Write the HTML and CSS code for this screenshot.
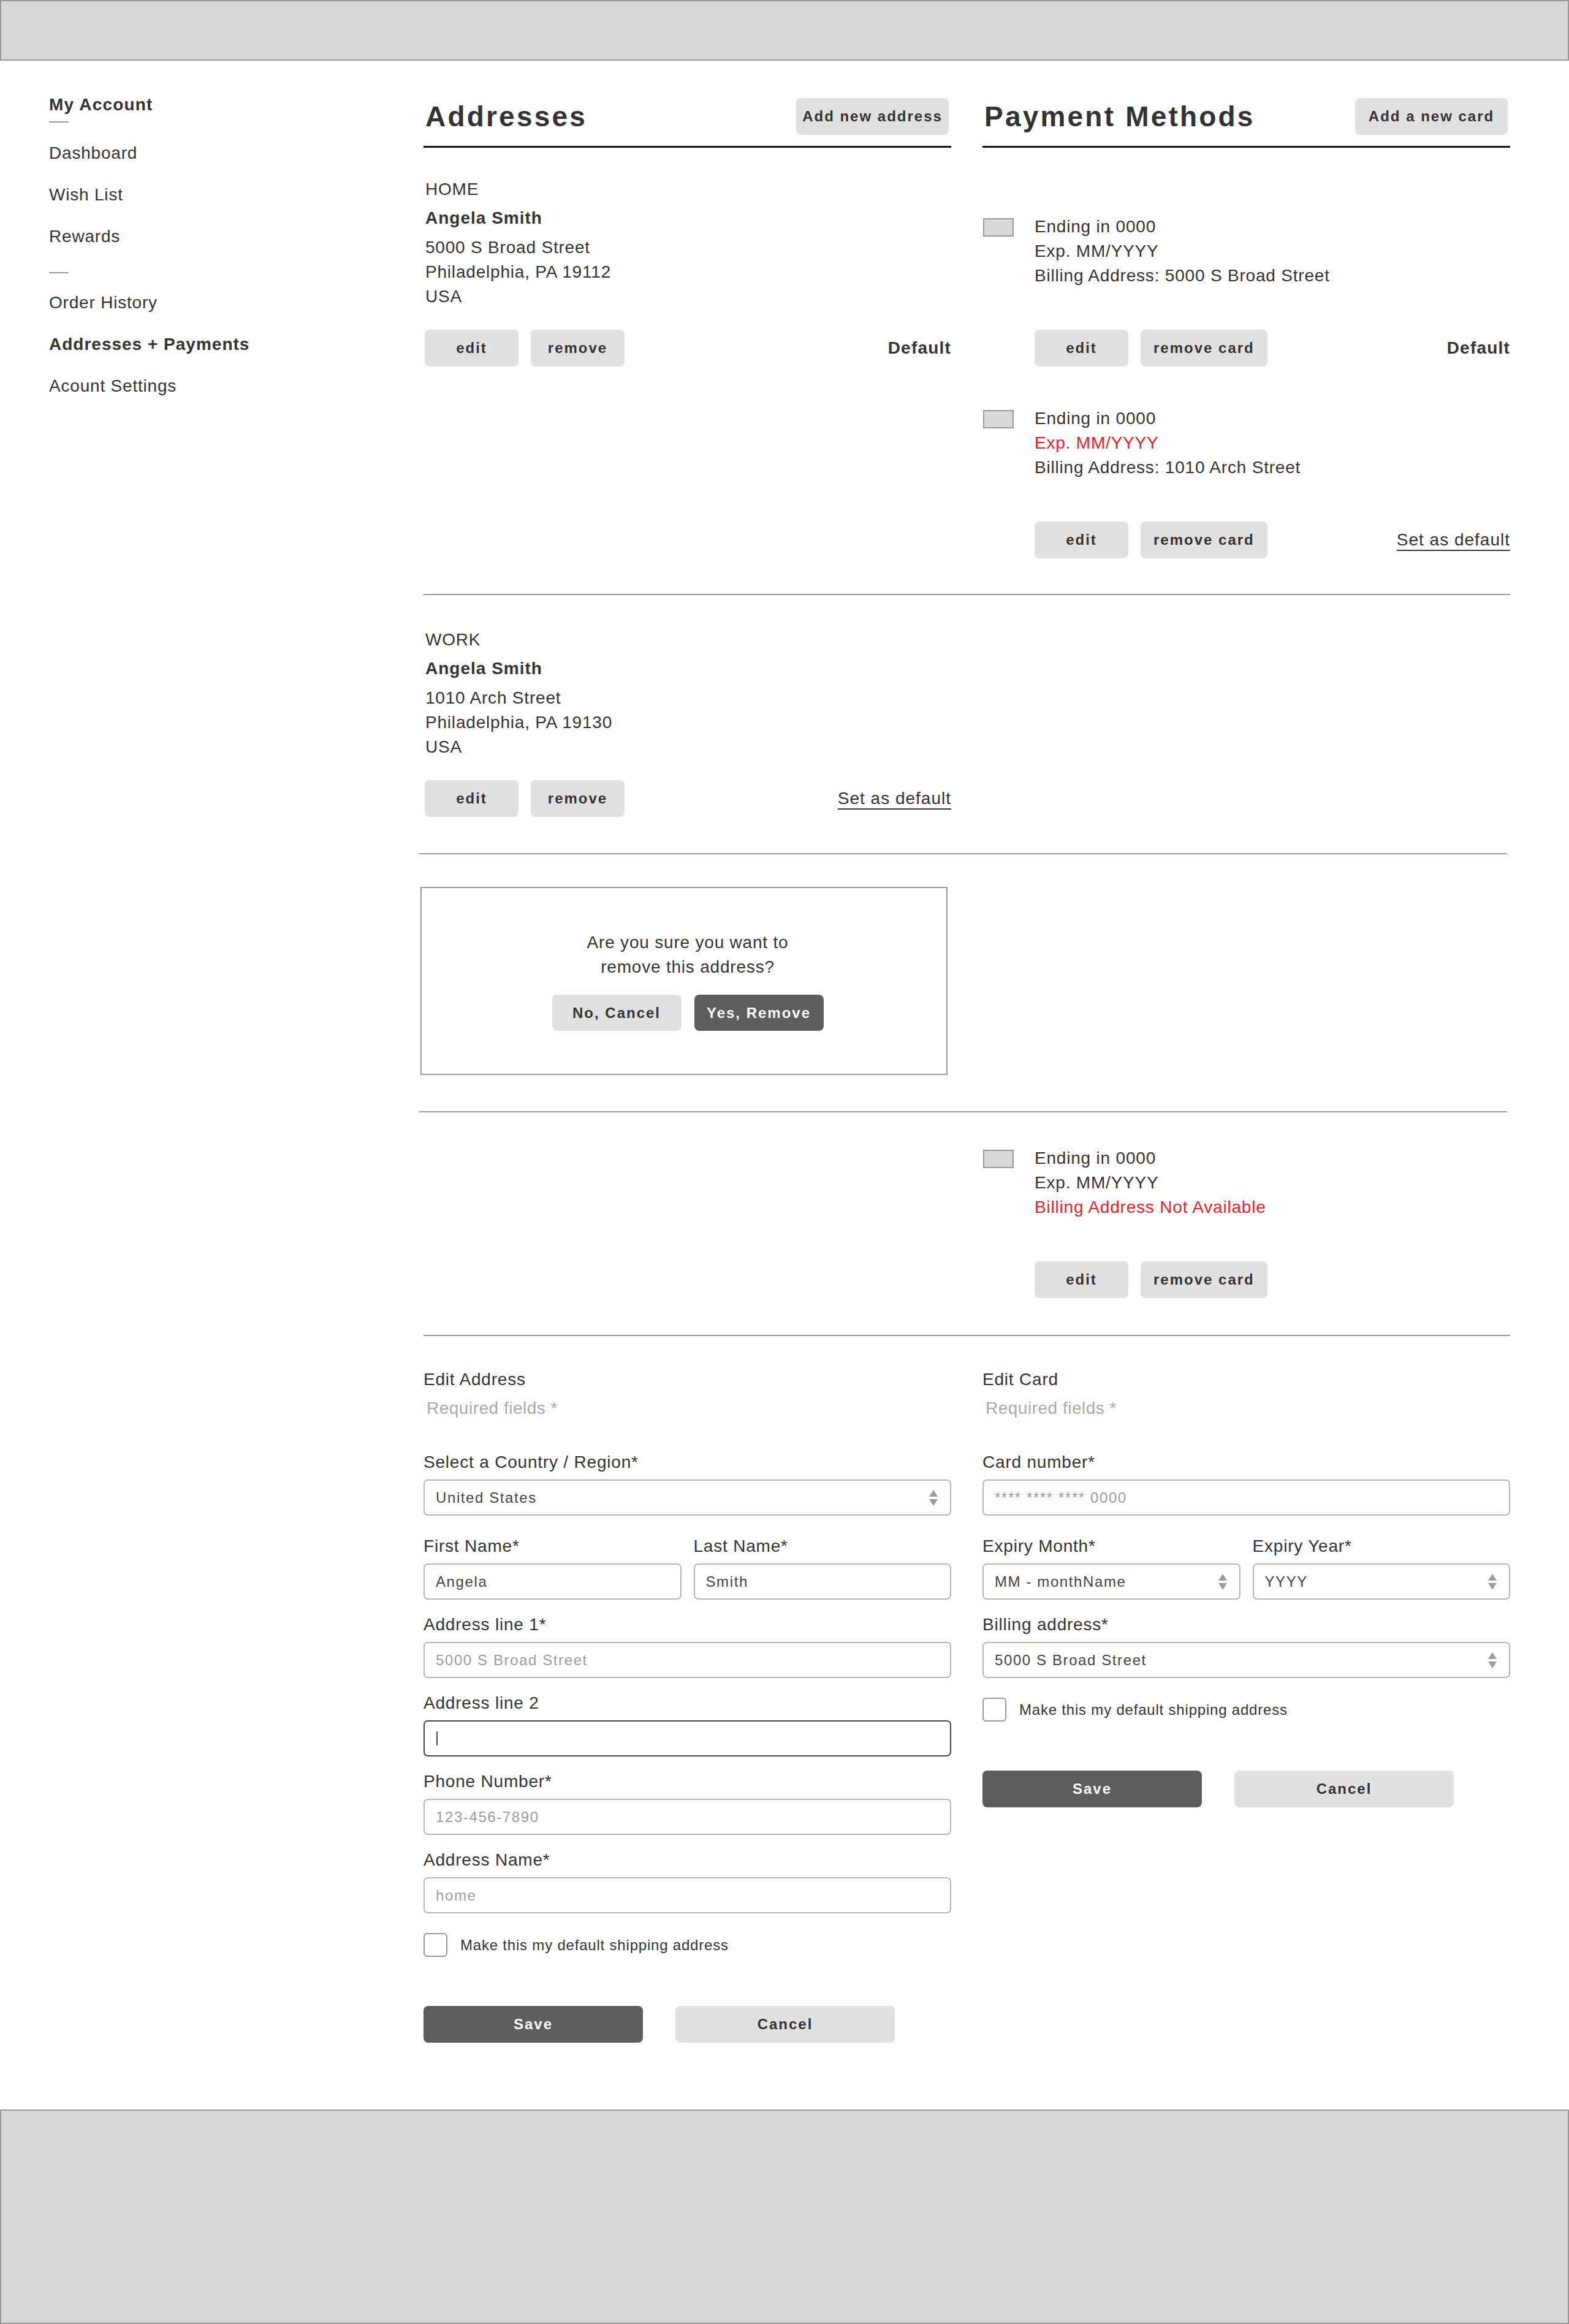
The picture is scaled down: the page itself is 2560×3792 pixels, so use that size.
FILE: index.html
```html
<!DOCTYPE html>
<html lang="en">
<head>
<meta charset="utf-8">
<title>My Account – Addresses + Payments</title>
<link rel="stylesheet" href="styles.css">
</head>
<body>
<header class="topbar"></header>

<div class="page">
  <nav class="sidebar">
    <div class="nav-title">My Account</div>
    <span class="nav-dash dash-title"></span>
    <a class="nav-item first" href="#">Dashboard</a>
    <a class="nav-item" href="#">Wish List</a>
    <a class="nav-item" href="#">Rewards</a>
    <span class="nav-dash dash-mid"></span>
    <a class="nav-item after-dash" href="#">Order History</a>
    <a class="nav-item active" href="#">Addresses + Payments</a>
    <a class="nav-item" href="#">Acount Settings</a>
  </nav>

  <main class="main">
    <!-- Top band -->
    <section class="band band-top">
      <div class="col">
        <div class="col-head">
          <h2 class="col-title">Addresses</h2>
          <button class="btn btn-head">Add new address</button>
        </div>
        <div class="address addr-first">
          <div class="line addr-type">HOME</div>
          <div class="line addr-name">Angela Smith</div>
          <div class="line">5000 S Broad Street</div>
          <div class="line">Philadelphia, PA 19112</div>
          <div class="line">USA</div>
          <div class="actions addr-actions">
            <button class="btn btn-sm">edit</button>
            <button class="btn btn-sm">remove</button>
            <span class="default">Default</span>
          </div>
        </div>
      </div>

      <div class="col">
        <div class="col-head">
          <h2 class="col-title">Payment Methods</h2>
          <button class="btn btn-head">Add a new card</button>
        </div>
        <div class="card-list">
          <div class="card">
            <span class="card-icon"></span>
            <div class="card-body">
              <div class="line">Ending in 0000</div>
              <div class="line">Exp. MM/YYYY</div>
              <div class="line">Billing Address: 5000 S Broad Street</div>
              <div class="actions card-actions">
                <button class="btn btn-sm">edit</button>
                <button class="btn btn-sm">remove card</button>
                <span class="default">Default</span>
              </div>
            </div>
          </div>
          <div class="card">
            <span class="card-icon"></span>
            <div class="card-body">
              <div class="line">Ending in 0000</div>
              <div class="line warn">Exp. MM/YYYY</div>
              <div class="line">Billing Address: 1010 Arch Street</div>
              <div class="actions card-actions">
                <button class="btn btn-sm">edit</button>
                <button class="btn btn-sm">remove card</button>
                <a class="set-default" href="#">Set as default</a>
              </div>
            </div>
          </div>
        </div>
      </div>
    </section>
    <hr class="sep">

    <!-- Work address -->
    <section class="band band-work">
      <div class="col">
        <div class="address">
          <div class="line addr-type">WORK</div>
          <div class="line addr-name">Angela Smith</div>
          <div class="line">1010 Arch Street</div>
          <div class="line">Philadelphia, PA 19130</div>
          <div class="line">USA</div>
          <div class="actions addr-actions">
            <button class="btn btn-sm">edit</button>
            <button class="btn btn-sm">remove</button>
            <a class="set-default" href="#">Set as default</a>
          </div>
        </div>
      </div>
      <div class="col"></div>
    </section>
    <hr class="sep sep-shift">

    <!-- Confirm dialog -->
    <section class="band band-dialog">
      <div class="col">
        <div class="confirm">
          <div class="line">Are you sure you want to</div>
          <div class="line">remove this address?</div>
          <div class="confirm-actions">
            <button class="btn btn-dialog">No, Cancel</button>
            <button class="btn btn-dialog btn-dark">Yes, Remove</button>
          </div>
        </div>
      </div>
      <div class="col"></div>
    </section>
    <hr class="sep sep-shift">

    <!-- Card without billing address -->
    <section class="band band-card">
      <div class="col"></div>
      <div class="col">
        <div class="card">
          <span class="card-icon"></span>
          <div class="card-body">
            <div class="line">Ending in 0000</div>
            <div class="line">Exp. MM/YYYY</div>
            <div class="line warn">Billing Address Not Available</div>
            <div class="actions card-actions">
              <button class="btn btn-sm">edit</button>
              <button class="btn btn-sm">remove card</button>
            </div>
          </div>
        </div>
      </div>
    </section>
    <hr class="sep">

    <!-- Forms -->
    <section class="band band-forms">
      <form class="col form">
        <div class="line form-title">Edit Address</div>
        <div class="line req">Required fields *</div>

        <div class="fg fg-first">
          <label class="line flabel">Select a Country / Region*</label>
          <div class="field select"><span>United States</span>
            <svg class="arrows" width="14" height="26" viewBox="0 0 14 26"><polygon points="7,0 14,11 0,11"/><polygon points="0,15 14,15 7,26"/></svg>
          </div>
        </div>

        <div class="fg-row fg-after-select">
          <div class="fg">
            <label class="line flabel">First Name*</label>
            <input class="field" type="text" value="Angela">
          </div>
          <div class="fg">
            <label class="line flabel">Last Name*</label>
            <input class="field" type="text" value="Smith">
          </div>
        </div>

        <div class="fg fg-next">
          <label class="line flabel">Address line 1*</label>
          <input class="field" type="text" placeholder="5000 S Broad Street">
        </div>

        <div class="fg fg-next">
          <label class="line flabel">Address line 2</label>
          <div class="field focus"><span class="caret"></span></div>
        </div>

        <div class="fg fg-next">
          <label class="line flabel">Phone Number*</label>
          <input class="field" type="text" placeholder="123-456-7890">
        </div>

        <div class="fg fg-next">
          <label class="line flabel">Address Name*</label>
          <input class="field" type="text" placeholder="home">
        </div>

        <div class="check-row">
          <span class="checkbox"></span>
          <span>Make this my default shipping address</span>
        </div>

        <div class="form-actions">
          <button type="button" class="btn btn-wide btn-dark">Save</button>
          <button type="button" class="btn btn-wide">Cancel</button>
        </div>
      </form>

      <form class="col form">
        <div class="line form-title">Edit Card</div>
        <div class="line req">Required fields *</div>

        <div class="fg fg-first">
          <label class="line flabel">Card number*</label>
          <input class="field" type="text" placeholder="**** **** **** 0000">
        </div>

        <div class="fg-row fg-after-select">
          <div class="fg">
            <label class="line flabel">Expiry Month*</label>
            <div class="field select"><span>MM - monthName</span>
              <svg class="arrows" width="14" height="26" viewBox="0 0 14 26"><polygon points="7,0 14,11 0,11"/><polygon points="0,15 14,15 7,26"/></svg>
            </div>
          </div>
          <div class="fg">
            <label class="line flabel">Expiry Year*</label>
            <div class="field select"><span>YYYY</span>
              <svg class="arrows" width="14" height="26" viewBox="0 0 14 26"><polygon points="7,0 14,11 0,11"/><polygon points="0,15 14,15 7,26"/></svg>
            </div>
          </div>
        </div>

        <div class="fg fg-next">
          <label class="line flabel">Billing address*</label>
          <div class="field select"><span>5000 S Broad Street</span>
            <svg class="arrows" width="14" height="26" viewBox="0 0 14 26"><polygon points="7,0 14,11 0,11"/><polygon points="0,15 14,15 7,26"/></svg>
          </div>
        </div>

        <div class="check-row">
          <span class="checkbox"></span>
          <span>Make this my default shipping address</span>
        </div>

        <div class="form-actions">
          <button type="button" class="btn btn-wide btn-dark">Save</button>
          <button type="button" class="btn btn-wide">Cancel</button>
        </div>
      </form>
    </section>
  </main>
</div>

<footer class="footbar"></footer>
</body>
</html>
```

FILE: styles.css
```css
* { box-sizing: border-box; }

html, body { margin: 0; padding: 0; }

body {
  width: 2560px;
  background: #fff;
  color: #333;
  font-family: "Liberation Sans", Arial, Helvetica, sans-serif;
  font-size: 28px;
  letter-spacing: 0.8px;
}

/* Header / footer placeholders */
.topbar {
  height: 99px;
  background: #d8d8d8;
  border: 2px solid #999;
}
.footbar {
  height: 350px;
  background: #d8d8d8;
  border: 2px solid #999;
}

.page {
  display: flex;
  align-items: flex-start;
  padding-left: 80px;
}

/* Sidebar */
.sidebar {
  width: 611px;
  flex: none;
  padding-top: 52px;
  display: flex;
  flex-direction: column;
  align-items: flex-start;
}
.nav-title {
  font-weight: bold;
  line-height: 40px;
  letter-spacing: 1.2px;
}
.nav-dash {
  display: block;
  width: 32px;
  height: 2px;
  background: #999;
}
.dash-title { margin-top: 7px; }
.dash-mid { margin-top: 10px; }
.nav-item {
  color: #333;
  text-decoration: none;
  line-height: 40px;
  margin-bottom: 28px;
}
.nav-item.first { margin-top: 30px; }
.nav-item.after-dash { margin-top: 28px; }
.nav-item.active { font-weight: bold; letter-spacing: 1px; }

/* Main */
.main {
  width: 1773px;
  flex: none;
  padding-top: 61px;
  padding-bottom: 109px;
}

.band {
  display: grid;
  grid-template-columns: 861px 861px;
  column-gap: 51px;
  align-items: start;
}
.band-top { padding-bottom: 58px; }
.band-work { padding: 53px 0 59px; }
.band-dialog { padding: 53px 0 59px; }
.band-card { padding: 55px 0 60px; }
.band-forms { padding-top: 51px; }

.sep {
  display: block;
  border: 0;
  height: 2px;
  margin: 0;
  background: #999;
}
.sep-shift { margin-left: -7px; margin-right: 5px; }

.line { line-height: 40px; }
.warn { color: #e8212d; }

.col-head {
  display: flex;
  align-items: center;
  justify-content: space-between;
  padding-bottom: 18px;
  border-bottom: 3px solid #111;
}
.col-title {
  margin: 0;
  padding-left: 3px;
  font-size: 46px;
  line-height: 60px;
  font-weight: bold;
  letter-spacing: 3.2px;
  color: #333;
}

/* Buttons */
.btn {
  font-family: inherit;
  font-size: 24px;
  font-weight: bold;
  letter-spacing: 2px;
  color: #333;
  background: #e1e1e1;
  border: 0;
  border-radius: 8px;
  height: 60px;
  padding: 0 21px;
  margin: 0;
  cursor: pointer;
}
.btn-head { width: 249px; padding: 0; margin-right: 4px; }
.btn-sm { min-width: 153px; }
.btn-dark { background: #5d5d5d; color: #fff; }
.btn-dialog { width: 211px; height: 59px; padding: 0; }
.btn-wide { width: 358px; padding: 0; }

/* Addresses */
.address { padding-left: 3px; }
.addr-first { margin-top: 48px; }
.addr-type { margin-bottom: 7px; }
.addr-name { font-weight: bold; letter-spacing: 1px; margin-bottom: 8px; }

.actions {
  display: flex;
  align-items: center;
  gap: 20px;
}
.addr-actions { margin-top: 34px; margin-left: -1px; }
.card-actions { margin-top: 68px; }

.default {
  margin-left: auto;
  font-weight: bold;
  letter-spacing: 1.2px;
}
.set-default {
  margin-left: auto;
  color: #333;
  text-decoration: underline;
  text-decoration-thickness: 2px;
  text-underline-offset: 7px;
  letter-spacing: 1px;
}

/* Cards */
.card-list {
  padding-top: 109px;
  display: flex;
  flex-direction: column;
  gap: 65px;
}
.card { display: flex; align-items: flex-start; }
.card-icon {
  flex: none;
  width: 50px;
  height: 30px;
  margin: 6px 34px 0 1px;
  background: #d8d8d8;
  border: 2px solid #999;
}
.card-body { flex: 1; }

/* Confirm dialog */
.confirm {
  width: 860px;
  margin-left: -5px;
  border: 2px solid #999;
  padding: 69px 0 70px 12px;
  text-align: center;
}
.confirm-actions {
  display: flex;
  justify-content: center;
  gap: 21px;
  margin-top: 25px;
}

/* Forms */
.form { margin: 0; }
.req { margin-top: 7px; padding-left: 5px; color: #a9a9a9; letter-spacing: 0.5px; }

.fg { display: flex; flex-direction: column; }
.fg-first { margin-top: 48px; }
.fg-after-select { margin-top: 30px; }
.fg-next { margin-top: 21px; }
.fg-row {
  display: grid;
  grid-template-columns: 1fr 1fr;
  column-gap: 20px;
}
.flabel { display: block; margin-bottom: 8px; }

.field {
  display: flex;
  align-items: center;
  width: 100%;
  height: 59px;
  margin: 0;
  padding: 0 18px;
  border: 2px solid #b7b7aa;
  border-radius: 7px;
  background: #fff;
  font-family: inherit;
  font-size: 24px;
  letter-spacing: 1.6px;
  color: #444;
  outline: none;
}
.field::placeholder { color: #9c9c9c; opacity: 1; }
.select { justify-content: space-between; padding-right: 20px; }
.arrows { flex: none; fill: #9c9c9c; }
.focus { border-color: #444; }
.caret {
  display: block;
  width: 2px;
  height: 23px;
  background: #444;
  margin-left: 1px;
}

.check-row {
  display: flex;
  align-items: center;
  gap: 21px;
  margin-top: 32px;
  font-size: 24px;
  letter-spacing: 0.8px;
}
.checkbox {
  flex: none;
  width: 39px;
  height: 39px;
  border: 2px solid #999;
  border-radius: 6px;
  background: #fff;
}

.form-actions {
  display: flex;
  gap: 53px;
  margin-top: 80px;
}
```
